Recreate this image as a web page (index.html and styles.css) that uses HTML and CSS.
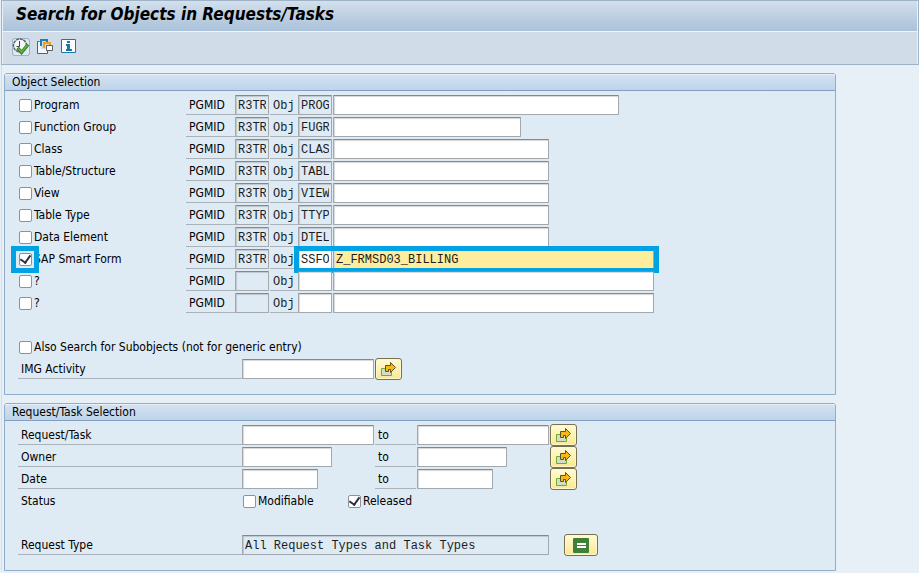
FILE: index.html
```html
<!DOCTYPE html>
<html lang="en">
<head>
<meta charset="utf-8">
<title>Search for Objects in Requests/Tasks</title>
<link rel="stylesheet" href="styles.css">
</head>
<body>
<svg class="defs" aria-hidden="true">
  <symbol id="more" viewBox="0 0 17 15">
    <path d="M1.500 6.500h10v7h-10z" fill="#d6dccb" stroke="#69b02c"/>
    <path d="M5.500 3.500h5V.5l5 5-5 5V7.500h-2v2h-3z" fill="#f9b912" stroke="#5d5226"/>
  </symbol>
</svg>

<header class="top">
  <h1 class="title">Search for Objects in Requests/Tasks</h1>
  <div class="toolbar">
    <button class="tool tool-active" aria-label="Execute">
      <svg width="18" height="18" viewBox="0 0 18 18">
        <circle cx="8" cy="7.500" r="6.500" fill="#f5f7f8" stroke="#5b5f63" stroke-width="1.400" stroke-dasharray="3 .7"/>
        <path d="M7.500 3v5.500M4.500 8.500h3" fill="none" stroke="#444" stroke-width="1"/>
        <path d="M5.500 10l4 4.500 6.500-8" fill="none" stroke="#2f7d1f" stroke-width="3.400"/>
        <path d="M6 10.500l3.500 3.500 6-7" fill="none" stroke="#67b648" stroke-width="1.600"/>
      </svg>
    </button>
    <button class="tool" aria-label="Get variant">
      <svg width="18" height="18" viewBox="0 0 18 18">
        <path d="M3.500 3.500h-2v12h10V13" fill="none" stroke="#5b5f63"/>
        <path d="M2 4h3v7h6v4H2z" fill="#f4f6f8"/>
        <path d="M5 8V2h6v2" fill="none" stroke="#1f7fae" stroke-width="2"/>
        <path d="M8 10V5h6v2" fill="none" stroke="#f0a01e" stroke-width="2"/>
        <path d="M10.500 7.500h6v5h-6z" fill="#fff" stroke="#5b5f63"/>
      </svg>
    </button>
    <button class="tool" aria-label="Information">
      <svg width="18" height="18" viewBox="0 0 18 18">
        <path d="M1.500 1.500h14v13h-14z" fill="#fff" stroke="#1878aa"/>
        <path d="M7 3h3v2H7zM6 6h4v5h2v2H6v-2h1V8H6z" fill="#1878aa"/>
      </svg>
    </button>
  </div>
</header>

<main class="main">
  <section class="panel">
    <h2 class="panel-title">Object Selection</h2>
    <div class="rows">
      <div class="row">
        <label class="check name"><input type="checkbox">Program</label>
        <label class="lab pgm" for="p1">PGMID</label><input class="field code" id="p1" value="R3TR" readonly>
        <label class="lab obj" for="o1">Obj</label><input class="field code" id="o1" value="PROG" readonly>
        <input class="field w-program" aria-label="Program name">
      </div>
      <div class="row">
        <label class="check name"><input type="checkbox">Function Group</label>
        <label class="lab pgm" for="p2">PGMID</label><input class="field code" id="p2" value="R3TR" readonly>
        <label class="lab obj" for="o2">Obj</label><input class="field code" id="o2" value="FUGR" readonly>
        <input class="field w-group" aria-label="Function group name">
      </div>
      <div class="row">
        <label class="check name"><input type="checkbox">Class</label>
        <label class="lab pgm" for="p3">PGMID</label><input class="field code" id="p3" value="R3TR" readonly>
        <label class="lab obj" for="o3">Obj</label><input class="field code" id="o3" value="CLAS" readonly>
        <input class="field w-name" aria-label="Class name">
      </div>
      <div class="row">
        <label class="check name"><input type="checkbox">Table/Structure</label>
        <label class="lab pgm" for="p4">PGMID</label><input class="field code" id="p4" value="R3TR" readonly>
        <label class="lab obj" for="o4">Obj</label><input class="field code" id="o4" value="TABL" readonly>
        <input class="field w-name" aria-label="Table name">
      </div>
      <div class="row">
        <label class="check name"><input type="checkbox">View</label>
        <label class="lab pgm" for="p5">PGMID</label><input class="field code" id="p5" value="R3TR" readonly>
        <label class="lab obj" for="o5">Obj</label><input class="field code" id="o5" value="VIEW" readonly>
        <input class="field w-name" aria-label="View name">
      </div>
      <div class="row">
        <label class="check name"><input type="checkbox">Table Type</label>
        <label class="lab pgm" for="p6">PGMID</label><input class="field code" id="p6" value="R3TR" readonly>
        <label class="lab obj" for="o6">Obj</label><input class="field code" id="o6" value="TTYP" readonly>
        <input class="field w-name" aria-label="Table type name">
      </div>
      <div class="row">
        <label class="check name"><input type="checkbox">Data Element</label>
        <label class="lab pgm" for="p7">PGMID</label><input class="field code" id="p7" value="R3TR" readonly>
        <label class="lab obj" for="o7">Obj</label><input class="field code" id="o7" value="DTEL" readonly>
        <input class="field w-name" aria-label="Data element name">
      </div>
      <div class="row">
        <label class="check name"><input type="checkbox" checked>SAP Smart Form</label>
        <label class="lab pgm" for="p8">PGMID</label><input class="field code" id="p8" value="R3TR" readonly>
        <label class="lab obj" for="o8">Obj</label><input class="field code" id="o8" value="SSFO">
        <input class="field w-long current" value="Z_FRMSD03_BILLING" aria-label="Smart form name">
        <span class="mark mark-check"></span>
        <span class="mark mark-field"></span>
      </div>
      <div class="row">
        <label class="check name"><input type="checkbox">?</label>
        <label class="lab pgm" for="p9">PGMID</label><input class="field code" id="p9" readonly>
        <label class="lab obj" for="o9">Obj</label><input class="field code" id="o9">
        <input class="field w-long" aria-label="Object name">
      </div>
      <div class="row">
        <label class="check name"><input type="checkbox">?</label>
        <label class="lab pgm" for="p10">PGMID</label><input class="field code" id="p10" readonly>
        <label class="lab obj" for="o10">Obj</label><input class="field code" id="o10">
        <input class="field w-long" aria-label="Object name">
      </div>
      <div class="row spaced">
        <label class="check"><input type="checkbox">Also Search for Subobjects (not for generic entry)</label>
      </div>
      <div class="row">
        <label class="lab caption" for="img">IMG Activity</label>
        <input class="field w-request" id="img">
        <button class="more" aria-label="Multiple selection"><svg width="17" height="15"><use href="#more"/></svg></button>
      </div>
    </div>
  </section>

  <section class="panel">
    <h2 class="panel-title">Request/Task Selection</h2>
    <div class="rows">
      <div class="row range">
        <label class="lab caption" for="rq">Request/Task</label>
        <input class="field w-request" id="rq">
        <label class="lab" for="rq2">to</label>
        <input class="field w-request" id="rq2">
        <button class="more" aria-label="Multiple selection"><svg width="17" height="15"><use href="#more"/></svg></button>
      </div>
      <div class="row range">
        <label class="lab caption" for="ow">Owner</label>
        <input class="field w-owner" id="ow">
        <label class="lab" for="ow2">to</label>
        <input class="field w-owner" id="ow2">
        <button class="more" aria-label="Multiple selection"><svg width="17" height="15"><use href="#more"/></svg></button>
      </div>
      <div class="row range">
        <label class="lab caption" for="dt">Date</label>
        <input class="field w-date" id="dt">
        <label class="lab" for="dt2">to</label>
        <input class="field w-date" id="dt2">
        <button class="more" aria-label="Multiple selection"><svg width="17" height="15"><use href="#more"/></svg></button>
      </div>
      <div class="row">
        <span class="lab caption plain">Status</span>
        <label class="check status"><input type="checkbox">Modifiable</label>
        <label class="check"><input type="checkbox" checked>Released</label>
      </div>
      <div class="row spaced">
        <label class="lab caption" for="rt">Request Type</label>
        <input class="field w-type" id="rt" value="All Request Types and Task Types" readonly>
        <button class="more wide" aria-label="Choose request types">
          <svg width="16" height="15" viewBox="0 0 16 15"><rect width="16" height="15" rx="1" fill="#3f8038"/><path d="M4 6h9M4 9h9" stroke="#fff" stroke-width="2"/><path d="M4 7.500h9" stroke="#3f8038"/></svg>
        </button>
      </div>
    </div>
  </section>
</main>
</body>
</html>
```
FILE: styles.css
```css
* { box-sizing: border-box; }

body {
  margin: 0;
  padding-left: 1px;
  background: #e8f0f7;
  color: #000;
  font: 12px/18px "DejaVu Sans Condensed", "DejaVu Sans", sans-serif;
}

.defs { position: absolute; width: 0; height: 0; }

button { padding: 0; cursor: pointer; }

.top {
  border: 1px solid #9fb3c8;
  box-shadow: inset 1px 1px #eaf1f8, inset -1px 0 #eaf1f8;
  background: #d0dde8;
}

.title {
  margin: 0 1px;
  padding-left: 13px;
  height: 31px;
  border-bottom: 1px solid #f0f5fa;
  background: linear-gradient(#d3e0ed, #c0d1e2 45%, #abc2da);
  font: italic bold 17px/27px "DejaVu Sans Condensed", "DejaVu Sans", sans-serif;
}

.toolbar {
  display: flex;
  gap: 6px;
  height: 32px;
  padding: 6px 10px;
}

.tool {
  width: 18px;
  height: 18px;
  border: 0;
  background: none;
}

.tool svg { display: block; }

.tool-active {
  border-radius: 3px;
  background: #dfe9f3;
  box-shadow: inset 0 0 0 1px #a0b0c6;
}

.main {
  display: flex;
  flex-direction: column;
  gap: 8px;
  max-width: 838px;
  padding: 8px 3px 0;
  border-left: 1px solid #d3deeb;
}

.panel {
  margin-left: -1px;
  border: 1px solid #92adca;
  border-radius: 3px 3px 0 0;
  background: #deeaf4;
}

.panel-title {
  margin: 0;
  padding-left: 7px;
  height: 17px;
  border-bottom: 1px solid #829fbf;
  border-radius: 2px 2px 0 0;
  background: linear-gradient(#d4e3f1, #bdd4ea);
  box-shadow: inset 0 1px #e8f1f9;
  font-size: 12px;
  font-weight: normal;
  line-height: 16px;
}

.rows {
  display: flex;
  flex-direction: column;
  gap: 2px;
  padding: 4px 13px 15px;
}

.row {
  position: relative;
  display: flex;
  align-items: center;
  gap: 1px;
  height: 20px;
}

.spaced { margin-top: 22px; }

.check {
  display: flex;
  align-items: center;
  gap: 2px;
  padding-left: 1px;
  line-height: 20px;
  white-space: nowrap;
}

.check input {
  appearance: none;
  flex: none;
  display: grid;
  place-items: center;
  width: 13px;
  height: 13px;
  margin: 0;
  border: 1px solid #8f9194;
  border-radius: 2px;
  background: #fff;
}

.check input:checked::after {
  content: "";
  width: 5px;
  height: 8px;
  margin-top: -2px;
  border: solid #2b2d45;
  border-width: 0 2px 2px 0;
  transform: rotate(35deg);
}

.name { width: 167px; }
.status { width: 104px; }

.lab {
  height: 20px;
  padding-left: 3px;
  border-bottom: 1px solid #abb3ba;
  line-height: 21px;
}

.plain { border-color: transparent; }
.pgm { width: 49px; margin-right: -1px; }

.obj {
  width: 28px;
  margin-right: -1px;
  color: #1c1c1c;
  font: 12px/22px "Liberation Mono", monospace;
}

.caption { width: 224px; margin-right: -1px; }

.field {
  height: 20px;
  padding: 2px 2px 0;
  border: 1px solid #a3a8ad;
  border-top-color: #85898e;
  border-radius: 1px;
  background: #fff;
  box-shadow: inset 1px 1px 1px #d5d7da;
  color: #1c1c1c;
  font: 12px "Liberation Mono", monospace;
  outline: 0;
}

.field:read-only {
  background: #deeaf4;
  box-shadow: inset 1px 1px 1px #bdc7d0;
}

.field.current { background: #ffed9e; }

.code { width: 34px; }
.w-program { width: 286px; }
.w-group { width: 188px; }
.w-name { width: 216px; }
.w-long { width: 321px; }
.w-request { width: 132px; }
.w-owner { width: 90px; }
.w-date { width: 76px; }
.w-type { width: 307px; }

.range {
  display: grid;
  grid-template: 20px / 223px 132px 41px 132px 27px;
}

.more {
  display: grid;
  place-items: center;
  width: 27px;
  height: 22px;
  border: 1px solid #77714f;
  border-radius: 3px;
  background: linear-gradient(#fffbd6, #fbe793);
  box-shadow: inset 0 0 0 1px #fff8c9;
}

.wide { width: 34px; margin-left: 14px; }

.mark {
  position: absolute;
  top: -3px;
  height: 27px;
  border: 5px solid #00a2e3;
  pointer-events: none;
}

.mark-check { left: -7px; width: 28px; }
.mark-field { left: 276px; width: 365px; }
```
